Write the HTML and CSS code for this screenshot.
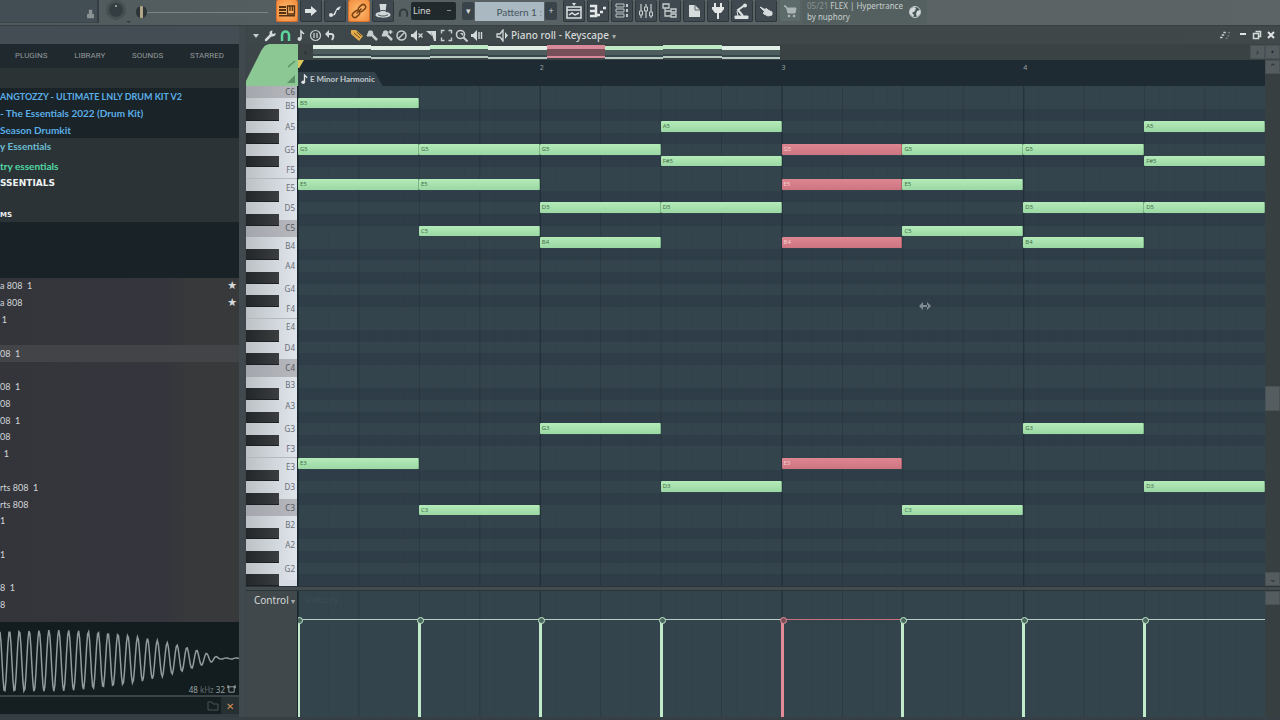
FILE: index.html
```html
<!DOCTYPE html>
<html lang="en">
<head>
<meta charset="utf-8">
<title>Piano roll - Keyscape</title>
<link rel="stylesheet" href="styles.css">
</head>
<body>
<div class="app">
  <header class="topbar">
    <div class="hint"><svg class="ic mini" viewBox="0 0 10 14"><path d="M1 7h8v5H1zM3 7V2h4v5" fill="#8a9294"/></svg></div>
    <div class="knobs">
      <svg class="knob" viewBox="0 0 28 24"><circle cx="12" cy="10" r="10" fill="#465053"/><circle cx="12" cy="10" r="7" fill="#343e42"/><circle cx="12" cy="6" r="1" fill="#b3babb"/><path d="M22 21h5l-2 2z" fill="#30393c"/></svg>
      <input class="pitch" type="range" min="0" max="100" value="0" aria-label="Main pitch">
    </div>
    <div class="tools">
      <button class="tb on" aria-label="Typing keyboard"><svg class="ic" viewBox="0 0 18 16"><path d="M1 3h7v2H1zm0 3h7v2H1zm0 3h7v2H1zM1 12h16v1.500H1z" fill="#563112"/><path d="M9.500 3h7v8h-7zM12 3v5m2.400-5v5" fill="none" stroke="#563112" stroke-width="1.400"/></svg></button>
      <button class="tb" aria-label="Step edit"><svg class="ic" viewBox="0 0 18 16"><path d="M3 6h6V3l6 5-6 5v-3H3z" fill="#dde2e3"/></svg></button>
      <button class="tb" aria-label="Slide"><svg class="ic" viewBox="0 0 18 16"><path d="M4 12h3l4-7 4-2-2 4h-2l-2 5-4 1z" fill="#dde2e3"/><circle cx="5" cy="12" r="2" fill="#dde2e3"/></svg></button>
      <button class="tb on" aria-label="Link"><svg class="ic" viewBox="0 0 18 16"><g fill="none" stroke="#7a4212" stroke-width="1.500"><rect x="8" y="2.500" width="8" height="5" rx="2.500" transform="rotate(-42 12 5)"/><rect x="2" y="8.500" width="8" height="5" rx="2.500" transform="rotate(-42 6 11)"/><path d="M6.500 10.500l5-5"/></g></svg></button>
      <button class="tb" aria-label="Blend"><svg class="ic" viewBox="0 0 18 16"><path d="M5.500 1h7l-1 8c3 0 5 1 5 3 0 3.500-15 3.500-15 0 0-2 2-3 5-3z" fill="#d3d9da"/><path d="M4 11.500c2 2 8 2 10 0M6.500 7.500h5" fill="none" stroke="#4b5558"/></svg></button>
    </div>
    <div class="snapbox">
      <svg class="ic magnet" viewBox="0 0 12 12"><path d="M2 10V6a4 4 0 0 1 8 0v4" fill="none" stroke="#30393b" stroke-width="2"/></svg>
      <select class="snap" aria-label="Snap"><option>Line</option></select>
    </div>
    <div class="pattern">
      <button class="pb" aria-label="Pattern menu">▾</button>
      <button class="pname">Pattern 1 <i>:</i></button>
      <button class="pb" aria-label="Add pattern">+</button>
    </div>
    <div class="tools views">
      <button class="tb" aria-label="Playlist"><svg class="ic" viewBox="0 0 18 16"><path d="M2 4h14v11H2z" fill="none" stroke="#dde2e3" stroke-width="1.500"/><path d="M2 7h14M4 12l3-2 3 2 4-2" fill="none" stroke="#dde2e3" stroke-width="1.500"/><path d="M7 0h4L9 3z" fill="#dde2e3"/></svg></button>
      <button class="tb" aria-label="Piano roll"><svg class="ic" viewBox="0 0 18 16"><path d="M1 3h6v10H1m0-5h6M8 12h3m0-3h3m0-4h3" fill="none" stroke="#e3e7e8" stroke-width="2.500"/></svg></button>
      <button class="tb" aria-label="Channel rack"><svg class="ic" viewBox="0 0 18 16"><path d="M3 1h8v3H3zm0 5h8v3H3zm0 5h8v3H3z" fill="none" stroke="#bfc6c8"/><path d="M13 1h2v3h-2zm0 5h2v3h-2zm0 5h2v3h-2z" fill="#bfc6c8"/></svg></button>
      <button class="tb" aria-label="Mixer"><svg class="ic" viewBox="0 0 18 16"><path d="M4 1v14M9 1v14M14 1v14" stroke="#c8cecf" stroke-width="1.200"/><path d="M2.500 8h3v4h-3zm5-4h3v4h-3zm5 5h3v4h-3z" fill="#4b5558" stroke="#c8cecf"/></svg></button>
      <button class="tb" aria-label="Browser"><svg class="ic" viewBox="0 0 18 16"><path d="M2 1h6v4H2zM10 6h5v3h-5zm0 5h5v3h-5zM4 5v8h6M4 8h6" fill="none" stroke="#c8cecf" stroke-width="1.300"/></svg></button>
      <button class="tb" aria-label="Project"><svg class="ic" viewBox="0 0 18 16"><path d="M4 2h6l5 5v7H4z" fill="#d6dbdc"/><path d="M10 2v5h5" fill="none" stroke="#59646a"/></svg></button>
      <button class="tb" aria-label="Plugins"><svg class="ic" viewBox="0 0 18 16"><path d="M6 0v4M12 0v4" stroke="#e3e7e8" stroke-width="2"/><path d="M3 4h12v2l-3 4h-2v6H8v-6H6L3 6z" fill="#e3e7e8"/></svg></button>
      <button class="tb" aria-label="Tempo tapper"><svg class="ic" viewBox="0 0 18 16"><path d="M12 2L5 7l5 6" fill="none" stroke="#dde2e3" stroke-width="2"/><circle cx="12" cy="2.500" r="2" fill="#dde2e3"/><path d="M2 13h13v2.500H2zM4 8l1 5" fill="#dde2e3" stroke="#dde2e3"/></svg></button>
      <button class="tb" aria-label="Touch"><svg class="ic" viewBox="0 0 18 16"><path d="M3 4l6 3V5l2 2 4 2v3l-4 1-4-2-1-1 2-1z" fill="#d6dbdc" stroke="#d6dbdc"/></svg></button>
      <button class="tb shop" aria-label="Shop"><svg class="ic" viewBox="0 0 18 16"><path d="M3 3h2l2 7h7l1-5H6z" fill="#aab4b3" stroke="#aab4b3"/><circle cx="8" cy="13" r="1.300" fill="#aab4b3"/><circle cx="13" cy="13" r="1.300" fill="#aab4b3"/></svg></button>
    </div>
    <div class="news">
      <p><span>05/21</span> FLEX | Hypertrance<br>by nuphory</p>
      <svg class="ic globe" viewBox="0 0 14 14"><circle cx="7" cy="7" r="5.500" fill="#4a5758" stroke="#c6cdcd"/><path d="M2 4l4-2 2 1-1 3-3 2 2 2-1 2-3-3zM9 6l3-1v4l-3 3-1-3z" fill="#d3d9d9"/></svg>
    </div>
  </header>

  <aside class="browser">
    <div class="bhead"></div>
    <nav class="tabs"><button>PLUGINS</button><button>LIBRARY</button><button>SOUNDS</button><button>STARRED</button></nav>
    <div class="bsearch"></div>
    <ul class="kits dark">
      <li class="long">ANGTOZZY - ULTIMATE LNLY DRUM KIT V2</li>
      <li>- The Essentials 2022 (Drum Kit)</li>
      <li>Season Drumkit</li>
    </ul>
    <ul class="kits grey">
      <li class="teal">y Essentials</li>
      <li class="green">try essentials</li>
      <li class="wide">SSENTIALS</li>
      <li class="wide small">MS</li>
    </ul>
    <div class="void"></div>
    <ul class="files" id="files"></ul>
    <div class="wave">
      <svg class="scope" viewBox="0 0 240 74" preserveAspectRatio="none"><path id="wave" fill="none" stroke="#929c9d" stroke-width="1.500"/></svg>
      <p class="rate">48 <span>kHz</span> 32 <svg class="ic" viewBox="0 0 10 10"><path d="M1 2h8M2 2v6h6V2M0 1h2v2H0zM8 1h2v2H8z" fill="none" stroke="#9aa3a4"/></svg></p>
    </div>
    <div class="bfoot">
      <svg class="ic" viewBox="0 0 12 12"><path d="M1 10V2h4l1 2h5v6z" fill="none" stroke="#4a5457"/></svg>
      <button class="close" aria-label="Close">✕</button>
    </div>
  </aside>

  <main class="roll">
    <div class="title">
      <svg class="ic" viewBox="0 0 13 13"><path d="M4 5h6L7 9z" fill="#c8cdce"/></svg>
      <svg class="ic" viewBox="0 0 13 13"><path d="M2 11l5-5" stroke="#d3d8d8" stroke-width="2.500" stroke-linecap="round"/><path d="M11.500 4A3 3 0 1 1 8.500 1.500L8 4l1 1z" fill="#d3d8d8"/></svg>
      <svg class="ic" viewBox="0 0 13 13"><path d="M3 12V6a3.500 3.500 0 0 1 7 0v6" fill="none" stroke="#5fd79b" stroke-width="2.500"/></svg>
      <svg class="ic" viewBox="0 0 13 13"><path d="M7 10V2l3 3" fill="none" stroke="#d3d8d8" stroke-width="1.500"/><circle cx="5.500" cy="10" r="2" fill="#d3d8d8"/></svg>
      <svg class="ic" viewBox="0 0 13 13"><circle cx="6.500" cy="6.500" r="5" fill="none" stroke="#c8cdce" stroke-width="1.200"/><path d="M5 4v5M8 4v5" stroke="#c8cdce" stroke-width="1.300"/></svg>
      <svg class="ic" viewBox="0 0 13 13"><path d="M4 5h3c3 0 3 3 1 6" fill="none" stroke="#d3d8d8" stroke-width="2"/><path d="M1 5l4-4v8z" fill="#d3d8d8"/></svg>
      <span class="sep"></span>
      <svg class="ic" viewBox="0 0 13 13"><path d="M1 1l5 0 7 6-4 5-8-7z" fill="#e0a94b"/><path d="M4 4l6 5M7 3l4 4" stroke="#76501a"/></svg>
      <svg class="ic" viewBox="0 0 13 13"><path d="M2 7l2-5 3 0 1 3-2 2z" fill="#c8cdce" stroke="#c8cdce"/><path d="M7 6l5 5" stroke="#c8cdce" stroke-width="2.500"/></svg>
      <svg class="ic" viewBox="0 0 13 13"><path d="M2 7l2-5 3 0 1 3-2 2z" fill="#c8cdce" stroke="#c8cdce"/><path d="M7 6l5 5" stroke="#c8cdce" stroke-width="2.500"/><path d="M10.500 1v4M8.500 3h4" stroke="#c8cdce" stroke-width="1.500"/></svg>
      <svg class="ic" viewBox="0 0 13 13"><circle cx="6.500" cy="6.500" r="4.500" fill="none" stroke="#c8cdce" stroke-width="1.500"/><path d="M3.500 9.500l6-6" stroke="#c8cdce" stroke-width="1.500"/></svg>
      <svg class="ic" viewBox="0 0 13 13"><path d="M1 5h2l4-4v11L3 8H1z" fill="#d3d8d8"/><path d="M8.500 4.500l4 4m0-4l-4 4" stroke="#d3d8d8" stroke-width="1.300"/></svg>
      <svg class="ic" viewBox="0 0 13 13"><path d="M1 2h5l1 5zM6 2h5v10H9z" fill="#d3d8d8"/></svg>
      <svg class="ic" viewBox="0 0 13 13"><path d="M1.500 4.500v-3h3m4 0h3v3m0 4v3h-3m-4 0h-3v-3" fill="none" stroke="#c8cdce" stroke-width="1.400"/></svg>
      <svg class="ic" viewBox="0 0 13 13"><circle cx="5.500" cy="5.500" r="4" fill="none" stroke="#c8cdce" stroke-width="1.600"/><path d="M8.500 8.500l4 4" stroke="#c8cdce" stroke-width="2"/><path d="M5 4h3v3z" fill="#c8cdce"/></svg>
      <svg class="ic" viewBox="0 0 13 13"><path d="M1 5h2l4-4v11L3 8H1z" fill="#d3d8d8"/><path d="M9 3v7M11.500 3v7" stroke="#d3d8d8" stroke-width="1.400"/></svg>
      <span class="sep"></span>
      <svg class="ic" viewBox="0 0 13 13"><path d="M1 5h3l3-4v11L4 8H1z" fill="none" stroke="#d3d8d8" stroke-width="1.300"/><path d="M9 3l3 3.500L9 10z" fill="#d3d8d8"/></svg>
      <h1>Piano roll - Keyscape <small>▾</small></h1>
      <div class="wbtns">
        <svg class="ic steps" viewBox="0 0 14 12"><path d="M1 9h3m-1-3h3m-1-3h3" stroke="#c8cdce" stroke-width="2"/><path d="M8 10h2m0-3h2m-1-4h2" stroke="#7f8789" stroke-width="1.500"/></svg>
        <button aria-label="Minimise"><svg class="ic" viewBox="0 0 10 10"><path d="M2 4h6" stroke="#dfe3e3" stroke-width="2"/></svg></button>
        <button aria-label="Restore"><svg class="ic" viewBox="0 0 10 10"><path d="M3.500 1.500h5v5h-2M1.500 3.500h5v5h-5z" fill="none" stroke="#d3d8d8" stroke-width="1.500"/></svg></button>
        <button aria-label="Close window"><svg class="ic" viewBox="0 0 10 10"><path d="M2 2l6 6m0-6L2 8" stroke="#dfe3e3" stroke-width="2"/></svg></button>
      </div>
    </div>

    <div class="corner"><svg class="ic" viewBox="0 0 12 28"><path d="M2 9l7-6" stroke="#5c9067" stroke-width="1.500"/><path d="M1 25h8v-8z" fill="#5c9067"/></svg></div>
    <div class="preview">
      <button class="arrow" aria-label="Scroll left">‹</button>
      <div class="clips" id="clips"></div>
      <button class="arrow light" aria-label="Scroll right">›</button>
    </div>
    <button class="arrow light fit" aria-label="Fit">•</button>

    <div class="ruler">
      <div class="bars"><span><i class="marker"></i></span><span>2</span><span>3</span><span>4</span></div>
      <div class="scale"><svg class="ic" viewBox="0 0 10 12"><path d="M5 9V1l3 3" fill="none" stroke="#dfe3e3" stroke-width="1.500"/><circle cx="3.500" cy="9" r="2" fill="#dfe3e3"/></svg>E Minor Harmonic</div>
    </div>
    <div class="sbar top"><button class="arrow light" aria-label="Scroll up">⌃</button></div>

    <div class="keys" id="keys"></div>
    <div class="notes" id="notes"></div>
    <div class="sbar mid"><div class="thumb"></div><button class="arrow light" aria-label="Scroll down">⌄</button></div>

    <div class="divider"></div>

    <div class="clabel"><button>Control <small>▾</small></button></div>
    <div class="control" id="control"><p class="ghost">Velocity</p></div>
    <div class="sbar"><div class="arrow light"></div></div>
  </main>
</div>
<script src="app.js"></script>
</body>
</html>
```

FILE: styles.css
```css
* { box-sizing: border-box; }
body { margin: 0; background: #000; font: 10px/12px "Noto Sans", "Open Sans", sans-serif; color: #d3d8d8; }
p, ul, h1 { margin: 0; padding: 0; list-style: none; }
button, select, input { font: inherit; color: inherit; border: 0; padding: 0; margin: 0; background: none; }
svg { display: block; }
small { font-size: 8px; opacity: .7; }
i { font-style: normal; }

.app {
  display: grid; height: 100vh; padding-bottom: 3px; overflow: hidden;
  grid-template: 26px minmax(0, 1fr) / 245px minmax(0, 1fr);
  background: #363f43;
}

/* main toolbar */
.topbar {
  grid-column: 1 / 3; display: flex; align-items: flex-start;
  background: linear-gradient(90deg, #505a5d, #586163 40%, #5c6466);
  border-bottom: 1px solid #363f42; overflow: hidden;
}
.hint { width: 99px; height: 23px; background: #434e54; border-right: 2px solid #343e42; border-bottom: 1px solid #3b4549; display: flex; justify-content: flex-end; align-items: flex-end; padding: 0 2px 2px 0; }
.mini { width: 9px; height: 12px; }
.knobs { width: 177px; display: flex; padding-left: 5px; }
.knob { width: 28px; height: 24px; flex: none; }
.pitch { appearance: none; width: 132px; height: 24px; margin-left: 4px; background: linear-gradient(#7b8485, #7b8485) 0 12px / 100% 1px no-repeat; }
.pitch::-webkit-slider-thumb { appearance: none; width: 11px; height: 12px; border-radius: 6px; background: linear-gradient(90deg, #2c3436 40%, #b3a686 40%, #b3a686 60%, #2c3436 60%); }
.tools { display: flex; gap: 2px; }
.tb { width: 22px; height: 22px; display: grid; place-items: center; background: #3f494f; border: 1px solid #2c363b; border-top: 0; border-radius: 2px; }
.tb .ic { width: 18px; height: 16px; }
.tb.on { background: radial-gradient(#ffc073, #f1893a); border-color: #d8702c; }
.tb.shop { background: #5e6b6b; border-color: #566262; }
.snapbox { display: flex; width: 68px; padding-top: 2px; }
.magnet { width: 11px; height: 12px; margin: 5px 2px 0 4px; }
.snap { appearance: none; width: 45px; height: 18px; padding-left: 2px; font-size: 9px; background: linear-gradient(#8e9698, #8e9698) 36px 8px / 4px 1px no-repeat #22292c; border-radius: 2px; }
.pattern { display: flex; gap: 1px; width: 100px; height: 21px; padding: 2px 5px 0 0; }
.pb { width: 12px; height: 18px; flex: none; background: #39434a; border-radius: 2px; font-size: 9px; }
.pname { flex: 1; background: #a9b8c1; color: #46545d; font: 10px/18px Lato, sans-serif; white-space: nowrap; text-align: right; padding-right: 2px; }
.pname i { opacity: .5; }
.views { margin-left: 1px; }
.news { display: flex; width: 125px; height: 24px; margin-left: 1px; padding-left: 5px; background: #54605f; font-size: 8px; line-height: 11px; white-space: nowrap; justify-content: space-between; color: #c8cfcf; }
.news span { color: #889292; }
.globe { width: 14px; height: 14px; margin: 5px 5px 0 0; }

/* browser */
.browser { display: flex; flex-direction: column; min-height: 0; border-right: 6px solid #40494d; overflow: hidden; }
.bhead { height: 18px; background: #434d53; flex: none; }
.tabs { height: 24px; flex: none; display: flex; justify-content: space-between; background: #20292e; padding: 0 15px; }
.tabs button { color: #90989a; font-family: Roboto, sans-serif; font-size: 8px; }
.bsearch { height: 20px; flex: none; background: #2b3335; }
.kits, .files { font-family: Lato, sans-serif; font-size: 10px; white-space: nowrap; }
.kits { font-weight: bold; line-height: 17px; flex: none; }
.kits.dark { background: #1a2328; height: 50px; color: #5aaee6; }
.kits .long { font-size: 9px; }
.kits.grey { background: #2b3336; height: 84px; }
.kits .teal { color: #6bbcd0; height: 20px; }
.kits .green { color: #52d8a5; }
.kits .wide { font: bold 9px/16px "DejaVu Sans", sans-serif; color: #eef1f1; height: 32px; }
.kits .small { font-size: 7px; height: 14px; }
.void { height: 56px; flex: none; background: #192226; }
.files { flex: 1; min-height: 0; display: grid; grid-template-rows: repeat(20, 2fr) 1fr; font-size: 9px; background: linear-gradient(90deg, #34353b, #35353d 70%, #38393b 78%); color: #d3d5d9; }
.files li { display: flex; justify-content: space-between; align-items: center; min-height: 0; line-height: 16px; padding-right: 2px; }
.files li.sel { background: #434448; }
.files span { text-align: right; white-space: pre; flex: none; }
.files b { font: 11px/16px "DejaVu Sans", sans-serif; color: #d6d9da; }
.wave { height: 75px; flex: none; background: #131c1f; display: grid; border-bottom: 2px solid #3a4347; }
.scope { grid-area: 1 / 1; width: 100%; height: 73px; }
.rate { grid-area: 1 / 1; align-self: end; justify-self: end; display: flex; gap: 2px; font: 8px/10px "Noto Sans", sans-serif; color: #9aa3a4; padding: 0 3px 0 0; }
.rate span { color: #626c6e; }
.rate .ic { width: 9px; height: 9px; }
.bfoot { height: 20px; flex: none; background: #151e21; border-bottom: 3px solid #333d41; display: flex; justify-content: flex-end; align-items: center; gap: 2px; }
.bfoot .ic { width: 12px; height: 12px; }
.close { width: 18px; height: 17px; background: #263033; color: #d98e55; }

/* piano roll window */
.roll {
  display: grid; min-width: 0; min-height: 0; padding-left: 1px;
  grid-template: 18px 16px 26px minmax(0, 1fr) 5px 126px / 52px minmax(0, 1fr) 15px;
  background: #3d4548;
}
.title { grid-column: 1 / 4; display: flex; align-items: center; gap: 2px; padding-left: 3px; background: linear-gradient(90deg, #3d4649, #414849); }
.title .ic { width: 13px; height: 13px; flex: none; }
.sep { width: 9px; }
.title h1 { font: 500 10px/16px "Noto Sans", sans-serif; color: #d3d8d8; white-space: nowrap; }
.wbtns { display: flex; gap: 4px; margin-left: auto; padding-right: 4px; }
.wbtns .ic { width: 10px; height: 10px; }
.wbtns .steps { width: 14px; margin-right: 2px; }
.corner { grid-area: 2 / 1 / 4 / 2; background: #8bc893; clip-path: polygon(0 88%, 30% 14%, 36% 4%, 44% 0, 100% 0, 100% 100%, 0 100%); display: flex; justify-content: flex-end; align-items: flex-end; }
.corner .ic { width: 12px; height: 28px; }
.preview { display: flex; background: #3a4244; padding: 1px 0; }
.arrow { width: 15px; height: 14px; flex: none; font-size: 9px; line-height: 12px; color: #20292c; }
.arrow.light { background: #545c60; border: 1px solid #495155; }
.arrow.fit { margin-top: 1px; }
.preview .light { margin-left: auto; }
.clips { display: grid; grid-template-columns: repeat(8, 1fr); width: 48.300%; }
.clip { height: 13px; border-top: 4px solid #e1efe6; border-bottom: 2px solid #b5c9c1; background: linear-gradient(#4d5c5d, #4d5c5d 5px, #38474b 5px); }
.clip.alt { margin-top: 1px; }
.clip.tint { border-top-color: #bfe9c5; }
.clip.pink { border-color: #d8899a; background: #774f59; }

.ruler { display: flex; flex-direction: column; justify-content: space-between; background: #1e2b33; overflow: hidden; }
.bars { display: grid; grid-template-columns: repeat(4, 1fr); height: 12px; font: 7px/16px "Noto Sans", sans-serif; color: #9ba5a8; }
.marker { display: block; width: 6px; height: 8px; background: #dcc65c; clip-path: polygon(0 0, 100% 0, 20% 100%, 0 100%); }
.scale { align-self: flex-start; display: flex; align-items: center; gap: 1px; padding: 0 8px 0 2px; height: 14px; background: #33424b; clip-path: polygon(0 0, calc(100% - 8px) 0, 100% 100%, 0 100%); font: bold 8px/14px Lato, sans-serif; color: #c3cacd; white-space: nowrap; }
.scale .ic { width: 9px; height: 11px; }
.sbar { background: #383f41; display: flex; flex-direction: column; }
.sbar.mid { justify-content: space-between; }
.thumb { height: 25px; margin-top: 300px; background: #555d61; border: 1px solid #495155; }

.keys { display: grid; grid-template: repeat(86, minmax(0, 1fr)) / 33px 1fr; background: #d5dae3; border-right: 1px solid #1b272e; }
.wkey { grid-column: 1 / 3; display: flex; align-items: center; justify-content: flex-end; padding-right: 2px; font: 8px/8px "Noto Sans", sans-serif; color: #6a7077; background: linear-gradient(90deg, #bcc1c6, #d3d8de 60%, #e0e4eb); }
.wkey.c { background: linear-gradient(90deg, #a3a6ac, #b6b8be); color: #555a61; }
.wkey.edge { border-bottom: 1px solid #b3b9bf; }
.bkey { grid-column: 1; background: linear-gradient(90deg, #23272a, #3b3d3f); border-bottom: 1px solid #1c2022; }

.notes, .control {
  position: relative;
  background:
    linear-gradient(90deg, #223038 1px, transparent 1px) 0 0 / 25% 100%,
    linear-gradient(90deg, #2c3a43 1px, transparent 1px) 0 0 / 6.250% 100%,
    linear-gradient(90deg, #0000000a 1px, transparent 1px) 0 0 / 1.5625% 100%,
    #34444d;
}
.notes { display: grid; grid-template: repeat(43, minmax(0, 1fr)) / repeat(8, minmax(0, 1fr)); overflow: hidden; }
.shade { grid-column: 1 / 9; background: #1824302e; }
.note { margin: 0 0 1px; padding-left: 2px; border-right: 1px solid #7fb78a; border-radius: 1px; background: linear-gradient(#b4ebb9, #9bd8a3); font: 6px/11px "Noto Sans", sans-serif; color: #45714d; overflow: hidden; }
.note.pink { background: linear-gradient(#dd8791, #cd7480); border-color: #b5626e; color: #f4cdd2; }
.cursor { position: absolute; left: 64.200%; top: 43%; width: 12px; height: 10px; }

.divider { grid-column: 1 / 4; background: #434b4e; border-top: 1px solid #2b3438; border-bottom: 1px solid #2b3438; }
.clabel { background: #40484b; border-right: 1px solid #1b272e; }
.clabel button { padding: 1px 0 0 8px; line-height: 16px; white-space: nowrap; }
.control { display: grid; grid-template: 28px 1fr / repeat(8, minmax(0, 1fr)); overflow: hidden; }
.ghost { grid-column: 1 / 9; padding: 2px 8px; color: #3b4c56; font-size: 9px; line-height: 14px; }
.stem { position: relative; margin-left: -1px; border-top: 1px solid #b8cfc6; border-left: 3px solid #c1ebc8; }
.stem::before { content: ""; position: absolute; left: -4px; top: -3px; width: 5px; height: 5px; border: 1px solid #c1ebc8; border-radius: 50%; background: #4c6660; }
.stem.pink { border-color: #c8707f #c8707f #c8707f #e58c99; }
.stem.pink::before { border-color: #e58c99; background: #774f59; }
```

FILE: app.js
```js
const add = (parent, tag, cls, text) => {
  const el = document.createElement(tag);
  if (cls) el.className = cls;
  if (text) el.textContent = text;
  parent.append(el);
  return el;
};
const NAMES = ['C', 'C#', 'D', 'D#', 'E', 'F', 'F#', 'G', 'G#', 'A', 'A#', 'B'];
const TOP = 84, ROWS = 43;
const nameOf = m => NAMES[m % 12] + (Math.floor(m / 12) - 1);
const isBlack = m => NAMES[m % 12].length === 2;
const midi = n => NAMES.indexOf(n.slice(0, -1)) + 12 * (Number(n.slice(-1)) + 1);

/* keyboard: two half rows per semitone, naturals reach under their sharps */
const keys = document.getElementById('keys');
const notes = document.getElementById('notes');
for (let r = 0; r < ROWS; r++) {
  const m = TOP - r;
  if (isBlack(m)) {
    add(notes, 'div', 'shade').style.gridRow = String(r + 1);
    continue;
  }
  const start = Math.max(1, 2 * r + 1 - (isBlack(m + 1) ? 1 : 0));
  const end = 2 * r + 3 + (isBlack(m - 1) ? 1 : 0);
  const letter = NAMES[m % 12];
  const cls = 'wkey' + (letter === 'C' ? ' c' : '') + (letter === 'F' ? ' edge' : '');
  add(keys, 'div', cls, nameOf(m)).style.gridRow = start + ' / ' + end;
}
for (let r = 0; r < ROWS; r++) {
  if (isBlack(TOP - r)) add(keys, 'div', 'bkey').style.gridRow = (2 * r + 1) + ' / ' + (2 * r + 3);
}

/* chords, one list for each half bar */
const chords = [
  ['B5', 'G5', 'E5', 'E3'],
  ['G5', 'E5', 'C5', 'C3'],
  ['G5', 'D5', 'B4', 'G3'],
  ['A5', 'F#5', 'D5', 'D3'],
  ['G5', 'E5', 'B4', 'E3'],
  ['G5', 'E5', 'C5', 'C3'],
  ['G5', 'D5', 'B4', 'G3'],
  ['A5', 'F#5', 'D5', 'D3']
];
const clips = document.getElementById('clips');
const control = document.getElementById('control');
chords.forEach((chord, i) => {
  const pink = i === 4 ? ' pink' : '';
  chord.forEach(n => {
    add(notes, 'div', 'note' + pink, n).style.gridArea = (TOP - midi(n) + 1) + ' / ' + (i + 1);
  });
  add(control, 'div', 'stem' + pink);
  add(clips, 'div', 'clip' + (i % 2 ? ' alt' : '') + ([2, 5, 6].includes(i) ? ' tint' : '') + pink);
});
notes.insertAdjacentHTML('beforeend', '<svg class="cursor" viewBox="0 0 12 10"><path d="M0 5l4-4v8zM12 5L8 1v8zM3 4h6v2H3z" fill="#7f8c93"/></svg>');

/* sample files: end of the name, its right edge, starred */
const files = [
  ['a 808  1', 28, 1], ['a 808', 18, 1], ['1', 7], ['', 0], ['08  1', 18], ['', 0], ['08  1', 17],
  ['08', 6], ['08  1', 19], ['08', 8], ['1', 9], ['', 0], ['rts 808  1', 38], ['rts 808', 28],
  ['1', 4], ['', 0], ['1', 5], ['', 0], ['8  1', 15], ['8', 5], ['', 0]
];
const list = document.getElementById('files');
files.forEach(([name, edge, star], i) => {
  const li = add(list, 'li', i === 4 ? 'sel' : '');
  add(li, 'span', '', name).style.minWidth = edge + 'px';
  if (star) add(li, 'b', '', '★');
});

/* decaying sine of the selected sample */
let d = '';
for (let x = 0; x <= 240; x++) {
  const t = Math.min(1, Math.max(0, (x - 50) / 170));
  const amp = x < 220 ? 30 * (1 - Math.pow(t, 2)) + 1 : 0.600;
  const y = 37 + 3 * (1 - Math.min(1, x / 200)) - amp * Math.cos((x - 9.500) / 9.900 * Math.PI * 2);
  d += (x ? 'L' : 'M') + x + ' ' + y.toFixed(1);
}
document.getElementById('wave').setAttribute('d', d);
```
